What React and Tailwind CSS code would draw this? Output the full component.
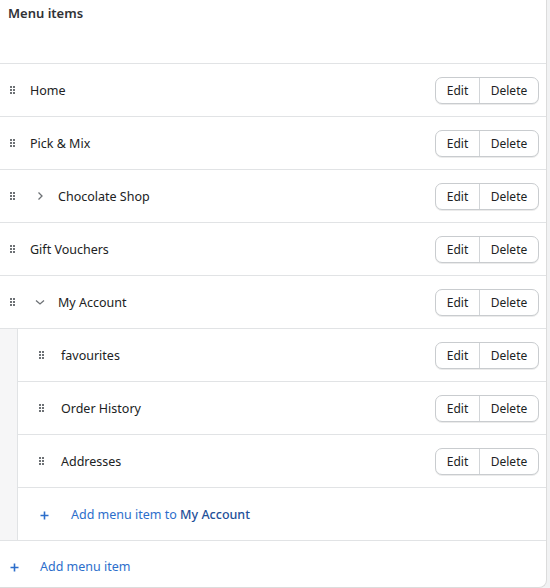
import React from "react";

const font = { fontFamily: '"Noto Sans", "Open Sans", sans-serif' };

function Handle() {
  return (
    <svg width="6" height="8" viewBox="0 0 6 8" className="shrink-0">
      {[0, 3, 6].map((y) =>
        [0, 3].map((x) => <rect key={`${x}-${y}`} x={x} y={y} width="2" height="2" fill="#6d7175" />)
      )}
    </svg>
  );
}

function ChevronRight() {
  return (
    <svg width="10" height="10" viewBox="0 0 10 10" className="shrink-0">
      <path d="M3.5 1.5 L7 5 L3.5 8.5" fill="none" stroke="#6d7175" strokeWidth="1.3" />
    </svg>
  );
}

function ChevronDown() {
  return (
    <svg width="10" height="10" viewBox="0 0 10 10" className="shrink-0">
      <path d="M1 3.5 L5 7 L9 3.5" fill="none" stroke="#6d7175" strokeWidth="1.3" />
    </svg>
  );
}

function Buttons() {
  return (
    <div className="flex h-[27px] rounded-[7px] border border-[#c9cccf] shadow-[0_1px_0_rgba(0,0,0,0.08)] text-[12px] text-[#202223] bg-white">
      <div className="flex items-center justify-center w-[44px] border-r border-[#d2d5d8] pt-px">Edit</div>
      <div className="flex items-center justify-center w-[58px] pt-px">Delete</div>
    </div>
  );
}

function Row({ label, chevron }) {
  return (
    <div className="flex items-center h-[53px] border-t border-[#e1e3e5] pr-[7px]">
      <div className="pl-[10px]">
        <Handle />
      </div>
      {chevron ? (
        <>
          <div className="ml-[19px] w-[10px] flex justify-center">
            {chevron === "right" ? <ChevronRight /> : <ChevronDown />}
          </div>
          <span className="ml-[13px] text-[12.5px] text-[#202223] pt-[2px]">{label}</span>
        </>
      ) : (
        <span className="ml-[14px] text-[12.5px] text-[#202223] pt-[2px]">{label}</span>
      )}
      <div className="ml-auto">
        <Buttons />
      </div>
    </div>
  );
}

function RowN({ label }) {
  return (
    <div className="flex items-center h-[53px] border-t border-[#e1e3e5] pr-[7px]">
      <div className="pl-[21px]">
        <Handle />
      </div>
      <span className="ml-[16px] text-[12.5px] text-[#202223] pt-[2px]">{label}</span>
      <div className="ml-auto">
        <Buttons />
      </div>
    </div>
  );
}

function Plus() {
  return (
    <svg width="9" height="9" viewBox="0 0 9 9" className="shrink-0">
      <path d="M4.5 0.5 V8.5 M0.5 4.5 H8.5" stroke="#2c6ecb" strokeWidth="1.6" />
    </svg>
  );
}

export default function App() {
  return (
    <div className="w-[550px] h-[588px] bg-[#f1f2f3] overflow-hidden" style={font}>
      <div className="w-[547px] h-[588px] bg-white border-r border-b border-[#dcdcdc] rounded-br-[8px] flex flex-col">
        <div className="h-[63px] pl-[8px] pt-[5px]">
          <div className="text-[13px] font-semibold text-[#303236] leading-[16px]">Menu items</div>
        </div>
        <Row label="Home" />
        <Row label="Pick & Mix" />
        <Row label="Chocolate Shop" chevron="right" />
        <Row label="Gift Vouchers" />
        <Row label="My Account" chevron="down" />
        <div className="flex border-t border-[#e1e3e5]">
          <div className="w-[18px] bg-[#f6f6f7] border-r border-[#e1e3e5] shrink-0" />
          <div className="flex-1 flex flex-col -mt-px">
            {["favourites", "Order History", "Addresses"].map((l) => (
              <RowN key={l} label={l} />
            ))}
            <div className="flex items-center h-[53px] border-t border-[#e1e3e5]">
              <div className="pl-[22px] pt-[2px]">
                <Plus />
              </div>
              <span className="ml-[22px] text-[12.5px] text-[#2c6ecb] pt-[2px]">
                Add menu item to <span className="font-medium text-[#1f5199]">My Account</span>
              </span>
            </div>
          </div>
        </div>
        <div className="flex items-center flex-1 border-t border-[#e1e3e5] pt-[6px]">
          <div className="pl-[10px]">
            <Plus />
          </div>
          <span className="ml-[21px] text-[12.5px] text-[#2c6ecb]">Add menu item</span>
        </div>
      </div>
    </div>
  );
}
